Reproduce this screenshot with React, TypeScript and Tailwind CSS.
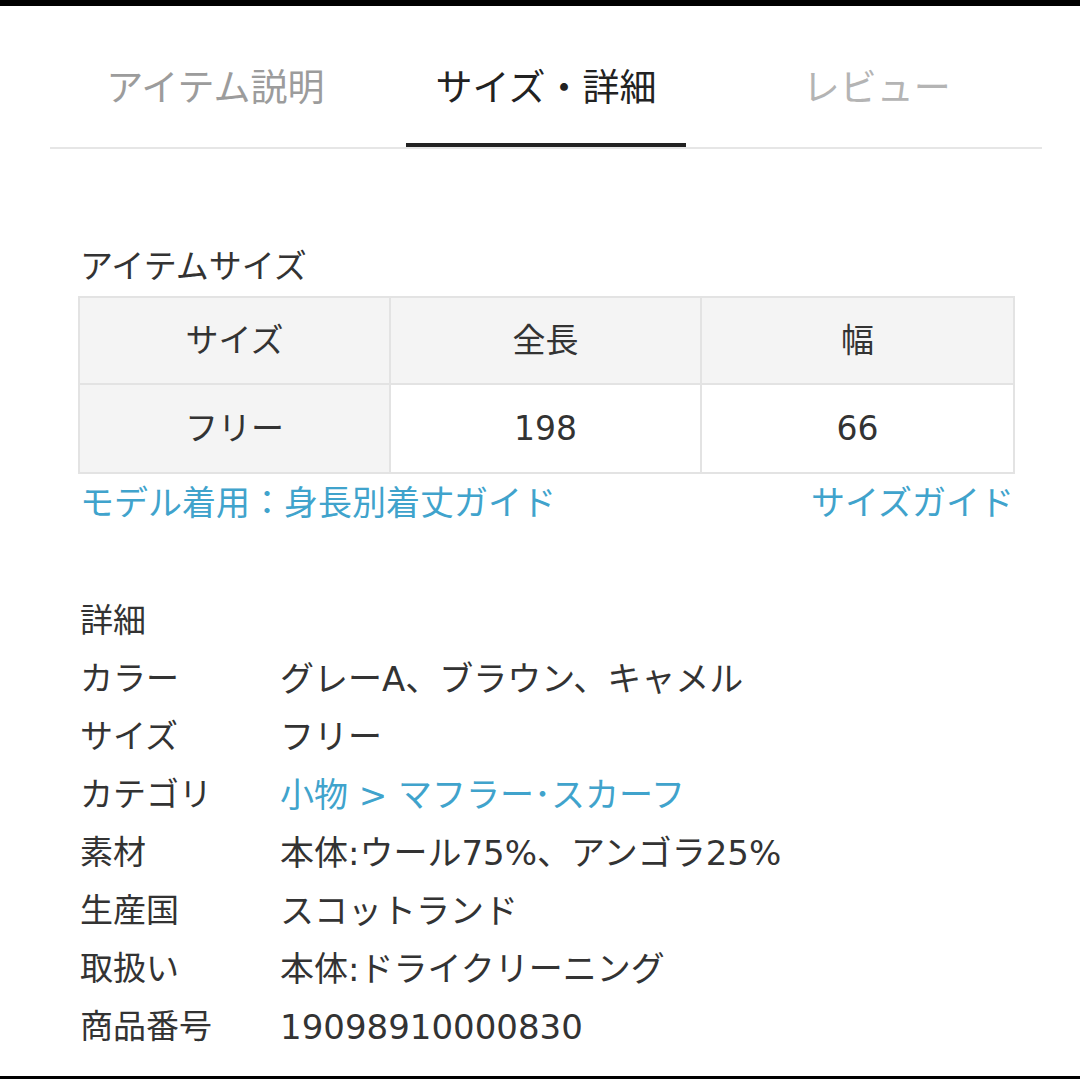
import React from 'react';

const font = { fontFamily: '"DejaVu Sans", "Noto Sans CJK JP", sans-serif' };

const details: { label: string; value: string; link?: boolean }[] = [
    { label: 'カラー', value: 'グレーA、ブラウン、キャメル' },
    { label: 'サイズ', value: 'フリー' },
    { label: 'カテゴリ', value: '小物 > マフラー･スカーフ', link: true },
    { label: '素材', value: '本体:ウール75%、アンゴラ25%' },
    { label: '生産国', value: 'スコットランド' },
    { label: '取扱い', value: '本体:ドライクリーニング' },
    { label: '商品番号', value: '19098910000830' },
];

function Tabs() {
    const tabs = ['アイテム説明', 'サイズ・詳細', 'レビュー'];
    return (
        <div className="ml-[50px] mr-[38px]">
            <div className="grid grid-cols-3">
                {tabs.map((t, i) => (
                    <div key={t} className="flex flex-col items-center">
                        <span
                            className={
                                'text-[37px] leading-[54px] pt-[56px] pb-[27px] ' +
                                (i === 1 ? 'text-[#222222]' : i === 0 ? 'text-[#9c9c9c]' : 'text-[#b4b4b4]')
                            }
                        >
                            {t}
                        </span>
                        <div className={'h-[4px] w-[280px] ' + (i === 1 ? 'bg-[#222222]' : 'bg-transparent')} />
                    </div>
                ))}
            </div>
            <div className="h-[2px] bg-[#e6e6e6]" />
        </div>
    );
}

function SizeTable() {
    const cell = 'h-[87px] flex items-center justify-center text-[33px] text-[#333333] border-[#e3e3e3]';
    return (
        <div className="ml-[78px] w-[937px] border-2 border-[#e3e3e3] grid grid-cols-3">
            <div className={cell + ' bg-[#f4f4f4] border-r-2 border-b-2'}>サイズ</div>
            <div className={cell + ' bg-[#f4f4f4] border-r-2 border-b-2'}>全長</div>
            <div className={cell + ' bg-[#f4f4f4] border-b-2'}>幅</div>
            <div className={cell + ' bg-[#f4f4f4] border-r-2'}>フリー</div>
            <div className={cell + ' bg-white border-r-2'}>198</div>
            <div className={cell + ' bg-white'}>66</div>
        </div>
    );
}

export default function App() {
    return (
        <div className="h-[1079px] w-[1080px] bg-white flex flex-col overflow-hidden" style={font}>
            <div className="h-[6px] bg-black" />
            <Tabs />

            <div className="ml-[80px] mt-[96px] text-[33px] leading-[44px] text-[#333333]">アイテムサイズ</div>
            <div className="mt-[7px]">
                <SizeTable />
            </div>
            <div className="ml-[80px] mr-[66px] mt-[6px] flex justify-between text-[34px] leading-[46px] text-[#40a3cc]">
                <span>モデル着用：身長別着丈ガイド</span>
                <span>サイズガイド</span>
            </div>

            <div className="ml-[80px] mt-[66px] flex flex-col text-[33px] text-[#333333]">
                <div className="h-[58px] flex items-center">詳細</div>
                {details.map((d) => (
                    <div key={d.label} className="h-[58px] flex items-center">
                        <span className="w-[200px]">{d.label}</span>
                        <span className={'text-[34px] ' + (d.link ? 'text-[#40a3cc]' : '')}>{d.value}</span>
                    </div>
                ))}
            </div>

            <div className="flex-1" />
            <div className="h-[3px] bg-black" />
        </div>
    );
}
